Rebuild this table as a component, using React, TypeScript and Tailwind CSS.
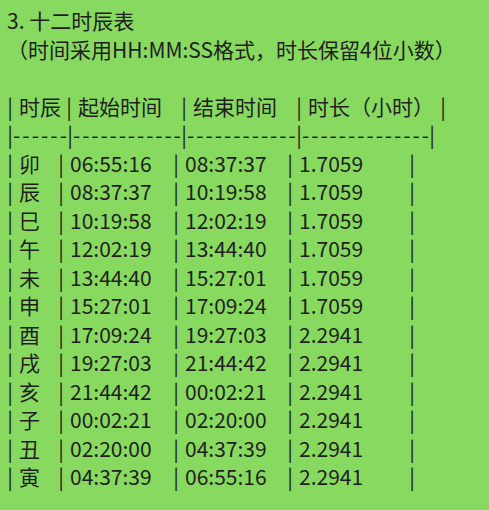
const rows: [string, string, string, string][] = [
  ["卯", "06:55:16", "08:37:37", "1.7059"],
  ["辰", "08:37:37", "10:19:58", "1.7059"],
  ["巳", "10:19:58", "12:02:19", "1.7059"],
  ["午", "12:02:19", "13:44:40", "1.7059"],
  ["未", "13:44:40", "15:27:01", "1.7059"],
  ["申", "15:27:01", "17:09:24", "1.7059"],
  ["酉", "17:09:24", "19:27:03", "2.2941"],
  ["戌", "19:27:03", "21:44:42", "2.2941"],
  ["亥", "21:44:42", "00:02:21", "2.2941"],
  ["子", "00:02:21", "02:20:00", "2.2941"],
  ["丑", "02:20:00", "04:37:39", "2.2941"],
  ["寅", "04:37:39", "06:55:16", "2.2941"],
];

function Pipe() {
  return <span className="flex w-0 shrink-0 justify-center">|</span>;
}

function Cell({ width, children }: { width: string; children?: React.ReactNode }) {
  return (
    <span className={`flex shrink-0 ${width}`}>
      <Pipe />
      <span className="ml-[9px] whitespace-nowrap">{children}</span>
    </span>
  );
}

// a run of dashes spread evenly between two pipes
function Dashes({ width, count }: { width: string; count: number }) {
  return (
    <span className={`flex shrink-0 ${width}`}>
      <Pipe />
      <span className="ml-[3px] mr-[3px] flex flex-1 justify-between">
        {Array.from({ length: count }, (_, i) => (
          <span key={i}>-</span>
        ))}
      </span>
    </span>
  );
}

export default function App() {
  return (
    <div
      className="min-h-screen bg-[#88d95f] pt-[6px] text-[21px] leading-[28.5px] text-[#1f1f1f]"
      style={{ fontFamily: '"Noto Sans CJK SC", "Noto Sans", sans-serif' }}
    >
      <div className="pl-[7px]">3. 十二时辰表</div>
      <div className="pl-[7px]">（时间采用HH:MM:SS格式，时长保留4位小数）</div>
      <div className="h-[28.5px]" />

      <div className="flex pl-[10px]">
        <Cell width="w-[59px]">时辰</Cell>
        <Cell width="w-[115px]">起始时间</Cell>
        <Cell width="w-[115px]">结束时间</Cell>
        <Cell width="w-[144px]">时长（小时）</Cell>
        <Pipe />
      </div>

      <div className="flex pl-[10px]">
        <Dashes width="w-[60px]" count={6} />
        <Dashes width="w-[114px]" count={12} />
        <Dashes width="w-[115px]" count={12} />
        <Dashes width="w-[133px]" count={14} />
        <Pipe />
      </div>

      {rows.map(([name, start, end, hours]) => (
        <div key={name} className="flex pl-[10px]">
          <Cell width="w-[51px]">{name}</Cell>
          <Cell width="w-[115px]">{start}</Cell>
          <Cell width="w-[114px]">{end}</Cell>
          <Cell width="w-[122px]">{hours}</Cell>
          <Pipe />
        </div>
      ))}
    </div>
  );
}
